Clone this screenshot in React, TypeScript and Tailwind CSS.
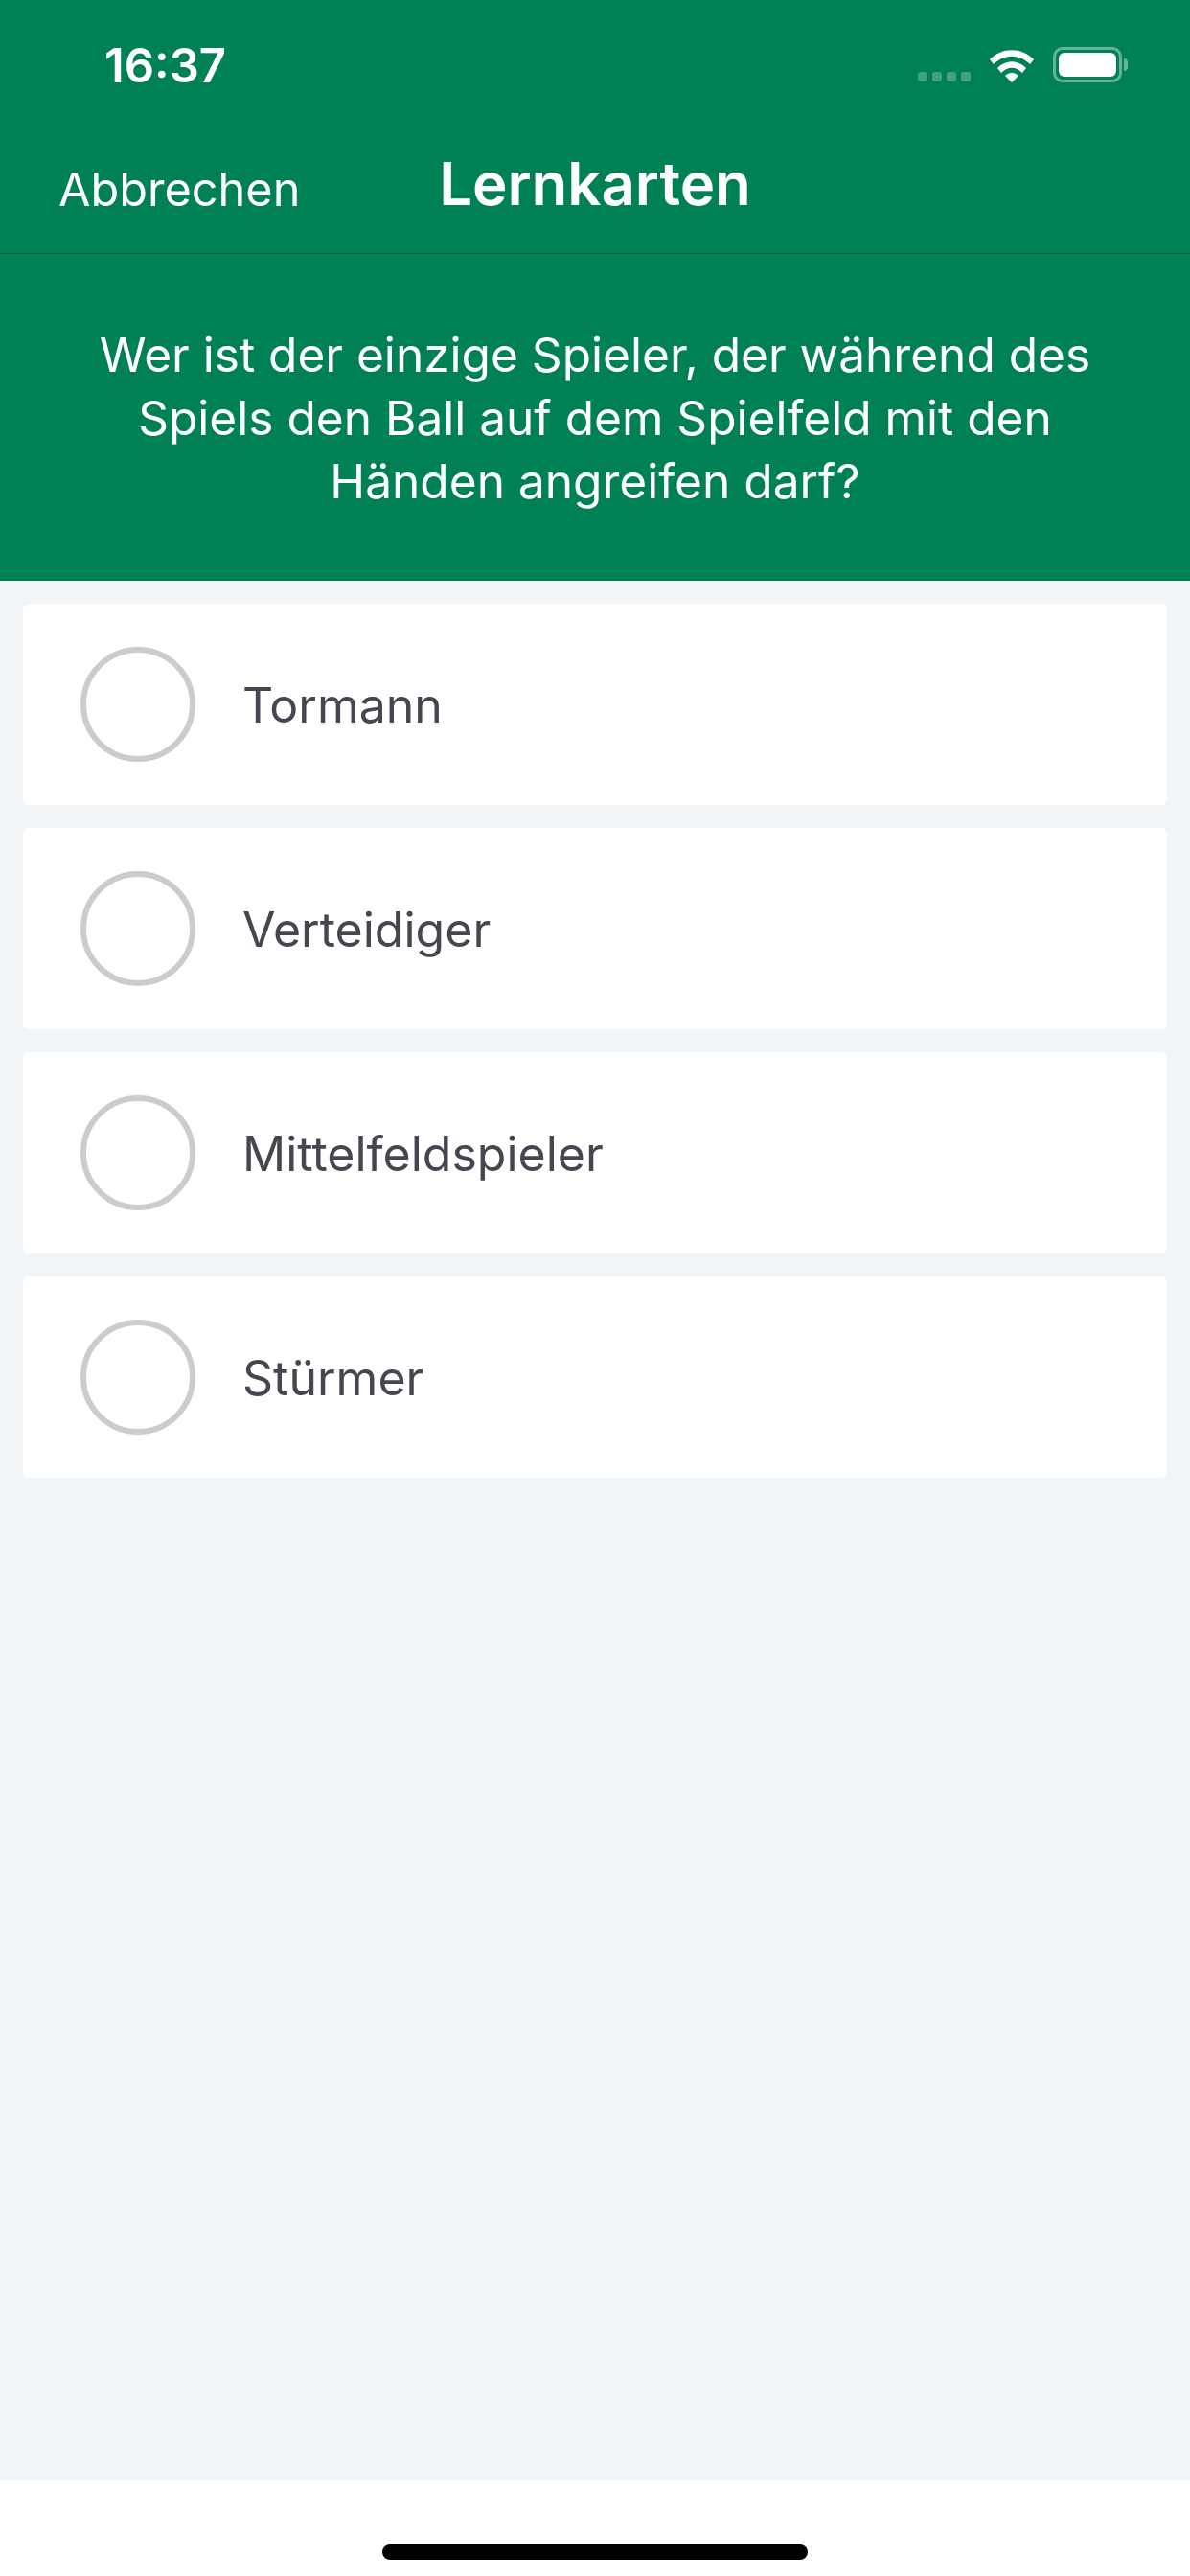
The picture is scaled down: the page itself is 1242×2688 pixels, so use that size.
import React from 'react';

const ANSWERS = ['Tormann', 'Verteidiger', 'Mittelfeldspieler', 'Stürmer'];

const StatusIcons: React.FC = () => (
  <div className="flex items-center">
    <div className="flex gap-[5px] mt-[24px]">
      {[0, 1, 2, 3].map((i) => (
        <span key={i} className="block w-[10px] h-[10px] rounded-[3px] bg-white/25" />
      ))}
    </div>
    <svg width="48" height="36" viewBox="0 0 48 36" className="ml-[19px]">
      <path d="M1 12 C 14 -1, 34 -1, 47 12 L 43 17 C 32 6, 16 6, 5 17 Z" fill="#fff" />
      <path d="M9 21 C 18 12, 30 12, 39 21 L 35 26 C 28 19, 20 19, 13 26 Z" fill="#fff" />
      <path d="M17 29 C 21 25, 27 25, 31 29 L 24 36 Z" fill="#fff" />
    </svg>
    <div className="ml-[19px] w-[72px] h-[37px] rounded-[10px] border-[3px] border-white/40 p-[3px]">
      <div className="w-full h-full rounded-[6px] bg-white" />
    </div>
    <div className="ml-[2px] w-[4px] h-[13px] rounded-r-[4px] bg-white/40" />
  </div>
);

const AnswerCard: React.FC<{ label: string }> = ({ label }) => (
  <div className="flex items-center h-[210px] bg-white rounded-[6px] pl-[60px]">
    <div className="w-[120px] h-[120px] rounded-full border-[6px] border-[#cccccc]" />
    <span className="ml-[49px] mt-[3px] text-[50px] text-[#45464f]">{label}</span>
  </div>
);

export default function App() {
  return (
    <div className="flex flex-col w-[1242px] h-[2688px] bg-[#f1f5f8] font-['Inter',sans-serif]">
      <header className="bg-[#008055] text-white">
        <div className="flex items-center justify-between h-[132px] pl-[109px] pr-[65px] pt-[3px]">
          <span className="text-[49px] font-semibold leading-none mt-[2px]">16:37</span>
          <StatusIcons />
        </div>
        <div className="relative flex items-center justify-center h-[133px] border-b-[1px] border-[#0a5c42]">
          <span className="absolute left-[61px] top-[30px] text-[48.6px]">Abbrechen</span>
          <h1 className="text-[61.7px] font-semibold -mt-[11px]">Lernkarten</h1>
        </div>
        <p className="h-[341px] px-[60px] pt-[72px] text-center text-[49.6px] leading-[66px]">
          Wer ist der einzige Spieler, der während des Spiels den Ball auf dem Spielfeld mit den Händen angreifen darf?
        </p>
      </header>

      <main className="flex-1 flex flex-col gap-[24px] pt-[24px] px-[24px]">
        {ANSWERS.map((a) => (
          <AnswerCard key={a} label={a} />
        ))}
      </main>

      <footer className="flex justify-center h-[100px] bg-white pt-[67px]">
        <div className="w-[444px] h-[16px] rounded-full bg-black" />
      </footer>
    </div>
  );
}
